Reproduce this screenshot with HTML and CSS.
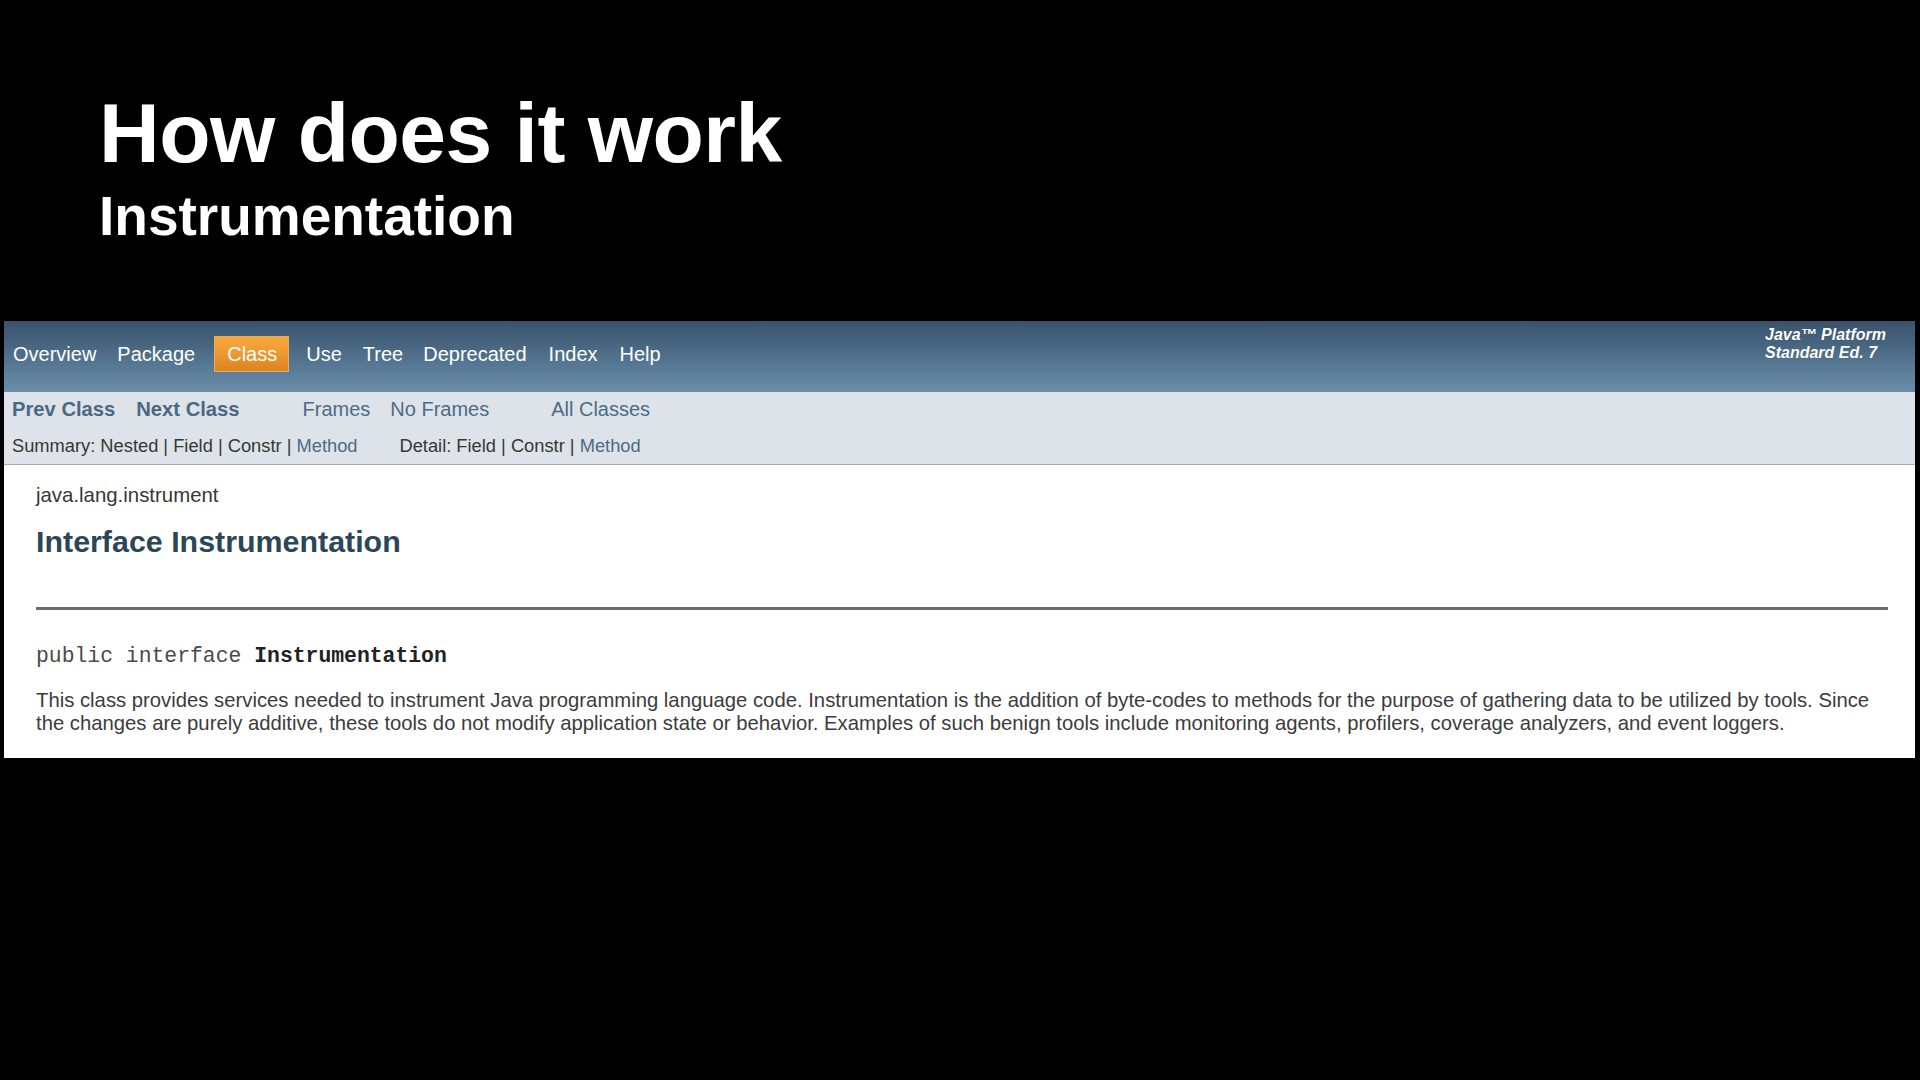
FILE: index.html
```html
<!DOCTYPE html>
<html lang="en">
<head>
<meta charset="utf-8">
<title>How does it work</title>
<link rel="stylesheet" href="styles.css">
</head>
<body>
<header class="slide-head">
  <h1 class="slide-title">How does it work</h1>
  <h2 class="slide-subtitle">Instrumentation</h2>
</header>

<section class="doc">
  <div class="top-nav">
    <ul class="nav-list">
      <li class="nav-item">Overview</li>
      <li class="nav-item">Package</li>
      <li class="nav-item nav-current">Class</li>
      <li class="nav-item">Use</li>
      <li class="nav-item">Tree</li>
      <li class="nav-item">Deprecated</li>
      <li class="nav-item">Index</li>
      <li class="nav-item">Help</li>
    </ul>
    <div class="about">Java™ Platform<br>Standard Ed. 7</div>
  </div>

  <div class="sub-nav">
    <div class="sub-row">
      <ul class="sub-list">
        <li class="sub-link strong">Prev Class</li>
        <li class="sub-link strong">Next Class</li>
      </ul>
      <ul class="sub-list">
        <li class="sub-link">Frames</li>
        <li class="sub-link">No Frames</li>
      </ul>
      <ul class="sub-list">
        <li class="sub-link">All Classes</li>
      </ul>
    </div>
    <div class="sub-row small">
      <div class="summary">Summary:&nbsp;Nested&nbsp;|&nbsp;Field&nbsp;|&nbsp;Constr&nbsp;|&nbsp;<span class="link">Method</span></div>
      <div class="detail">Detail:&nbsp;Field&nbsp;|&nbsp;Constr&nbsp;|&nbsp;<span class="link">Method</span></div>
    </div>
  </div>

  <div class="content">
    <div class="pkg">java.lang.instrument</div>
    <h2 class="type-title">Interface Instrumentation</h2>
    <div class="rule"></div>
    <pre class="signature">public interface <b>Instrumentation</b></pre>
    <p class="block">This class provides services needed to instrument Java programming language code. Instrumentation is the addition of byte-codes to methods for the purpose of gathering data to be utilized by tools. Since the changes are purely additive, these tools do not modify application state or behavior. Examples of such benign tools include monitoring agents, profilers, coverage analyzers, and event loggers.</p>
  </div>
</section>
</body>
</html>
```

FILE: styles.css
```css
html, body {
  margin: 0;
  padding: 0;
  background: #000;
}

body {
  width: 1920px;
  height: 1080px;
  overflow: hidden;
  font-family: "Liberation Sans", Arial, sans-serif;
}

.slide-head {
  padding: 91px 0 0 99px;
  color: #fff;
}

.slide-title {
  margin: 0;
  font-size: 84px;
  line-height: 84px;
  font-weight: bold;
  letter-spacing: -0.5px;
}

.slide-subtitle {
  margin: 14px 0 0 0;
  font-size: 55px;
  line-height: 54px;
  font-weight: bold;
  letter-spacing: 0;
}

.doc {
  margin: 78px 0 0 4px;
  width: 1911px;
  background: #fff;
}

/* top navigation bar */
.top-nav {
  height: 71px;
  display: flex;
  justify-content: space-between;
  align-items: flex-start;
  background: linear-gradient(to bottom, #3a536b 0%, #486681 35%, #5b7d99 70%, #6a8dab 100%);
}

.nav-list {
  list-style: none;
  margin: 15px 0 0 0;
  padding: 0;
  display: flex;
}

.nav-item {
  font-size: 20px;
  line-height: 34px;
  color: #fff;
  padding: 0 10px;
  border: 1px solid transparent;
  border-left: 0;
  border-right: 0;
}

.nav-item:first-child {
  padding-left: 9px;
}

.nav-item:nth-child(2) {
  padding-left: 11px;
}

.nav-current {
  margin: 0 7px 0 9px;
  padding: 0 11px 0 12px;
  border: 1px solid #e2b15c;
  background: linear-gradient(to bottom, #f9a83e 0%, #ef9a30 45%, #dc8220 100%);
}

.nav-item:nth-child(5) {
  padding-left: 11px;
}

.nav-item:nth-child(7) {
  padding-left: 12px;
}

.nav-item:last-child {
  padding-left: 12px;
}

.about {
  margin: 5px 28px 0 0;
  width: 122px;
  color: #fff;
  font-size: 16px;
  line-height: 18px;
  font-weight: bold;
  font-style: italic;
  white-space: nowrap;
  text-shadow: 0 0 1px rgba(0, 0, 0, 0.25);
}

/* sub navigation */
.sub-nav {
  background: #dee3e9;
  border-bottom: 1px solid #9eadc0;
  padding: 5px 0 7px 8px;
  height: 60px;
}

.sub-row {
  display: flex;
}

.sub-list {
  list-style: none;
  margin: 0 42px 0 0;
  padding: 0;
  display: flex;
}

.sub-link {
  font-size: 20px;
  line-height: 24px;
  color: #4c6b87;
  margin-right: 20px;
}

.strong {
  font-size: 20.2px;
  font-weight: bold;
  color: #4a6884;
  margin-right: 21px;
}

.sub-row.small {
  margin-top: 14px;
  font-size: 18.3px;
  line-height: 22px;
  color: #353833;
}

.summary {
  margin-right: 42px;
}

.link {
  color: #4c6b87;
}

/* content */
.content {
  padding: 19px 27px 23px 32px;
  color: #353833;
}

.pkg {
  font-size: 20.4px;
  line-height: 23px;
}

.type-title {
  margin: 17px 0 0 0;
  font-size: 30.4px;
  line-height: 34px;
  font-weight: bold;
  color: #2c4557;
}

.rule {
  margin-top: 49px;
  height: 3px;
  background: #6c6c6c;
}

.signature {
  margin: 34px 0 0 0;
  font-family: "Liberation Mono", "Courier New", monospace;
  font-size: 21.4px;
  line-height: 25px;
  color: #4a4a4a;
}

.signature b {
  color: #222;
}

.block {
  margin: 20px 0 0 0;
  font-size: 20.3px;
  line-height: 23px;
  color: #3c3c3c;
}
```
